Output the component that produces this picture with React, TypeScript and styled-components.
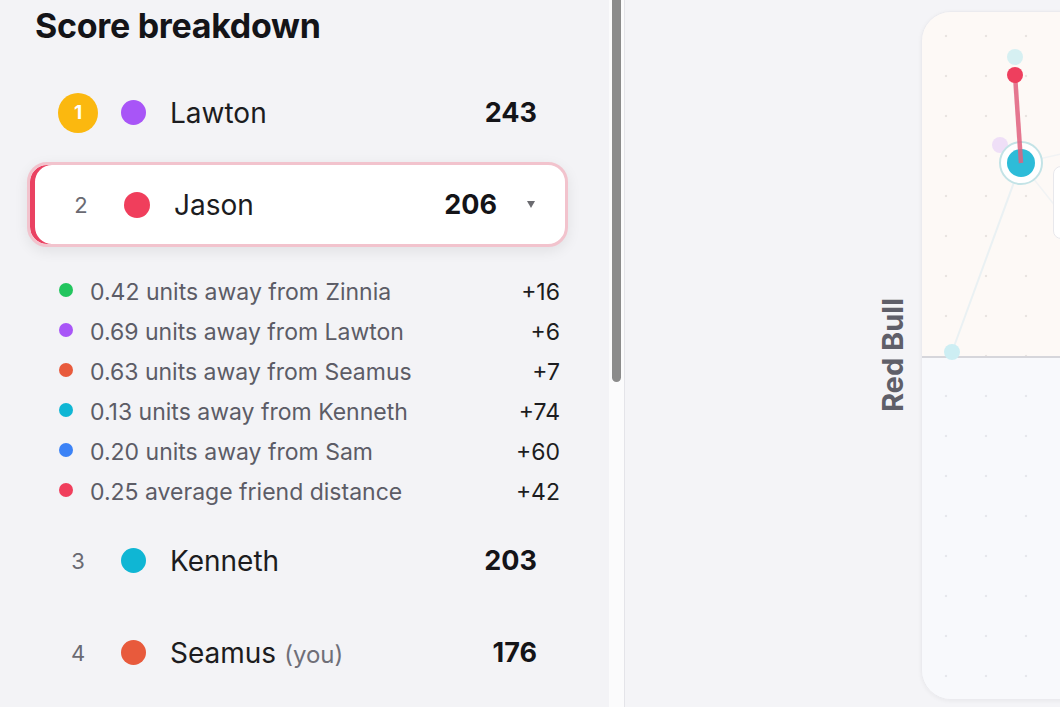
import styled, { createGlobalStyle } from 'styled-components';

type Player = {
  rank: number;
  name: string;
  color: string;
  score: number;
  you?: boolean;
  selected?: boolean;
};

type Reason = {
  color: string;
  text: string;
  points: string;
};

const players: Player[] = [
  { rank: 1, name: 'Lawton', color: '#a855f7', score: 243 },
  { rank: 2, name: 'Jason', color: '#f03e5c', score: 206, selected: true },
  { rank: 3, name: 'Kenneth', color: '#0fb6d4', score: 203 },
  { rank: 4, name: 'Seamus', color: '#e85a3c', score: 176, you: true },
];

const reasons: Reason[] = [
  { color: '#22c55e', text: '0.42 units away from Zinnia', points: '+16' },
  { color: '#a855f7', text: '0.69 units away from Lawton', points: '+6' },
  { color: '#e85a3c', text: '0.63 units away from Seamus', points: '+7' },
  { color: '#0fb6d4', text: '0.13 units away from Kenneth', points: '+74' },
  { color: '#3b82f6', text: '0.20 units away from Sam', points: '+60' },
  { color: '#f03e5c', text: '0.25 average friend distance', points: '+42' },
];

export default function App() {
  return (
    <>
      <GlobalStyle />
      <Page>
        <Panel>
          <Title>Score breakdown</Title>
          <List>
            {players.map((p) => (
              <PlayerBlock key={p.rank} player={p} />
            ))}
          </List>
        </Panel>
        <ScrollTrack>
          <Thumb />
        </ScrollTrack>
        <Main>
          <AxisLabel>Red Bull</AxisLabel>
          <ChartCard>
            <ChartTop />
            <ChartDivider />
            <ChartBottom />
            <Graph viewBox="0 0 640 687" width="640" height="687">
              <line x1="99" y1="151" x2="30" y2="340" stroke="#eaf1f3" strokeWidth="2" />
              <line x1="99" y1="151" x2="170" y2="135" stroke="#f1f3f4" strokeWidth="1.5" />
              <line x1="99" y1="151" x2="150" y2="215" stroke="#f1f3f4" strokeWidth="1.5" />
              <circle cx="30" cy="340" r="8" fill="#cdeef3" />
              <circle cx="93" cy="45" r="8" fill="#d6f0f2" />
              <circle cx="78" cy="133" r="8" fill="#efdff7" />
              <circle cx="99" cy="151" r="21" fill="#fff" stroke="#c3e3e6" strokeWidth="2" />
              <circle cx="99" cy="151" r="14" fill="#2dbcd8" />
              <line
                x1="93"
                y1="63"
                x2="99"
                y2="151"
                stroke="#e0607e"
                strokeWidth="4.5"
                strokeOpacity="0.85"
              />
              <circle cx="93" cy="63" r="8" fill="#ee3f5e" />
            </Graph>
            <Tooltip />
          </ChartCard>
        </Main>
      </Page>
    </>
  );
}

function PlayerBlock({ player }: { player: Player }) {
  const { rank, name, color, score, you, selected } = player;
  return (
    <>
      <Row $selected={selected}>
        <Rank $badge={rank === 1}>{rank}</Rank>
        <Dot $color={color} $size={selected ? 26 : 25} />
        <Name>
          {name}
          {you && <You>(you)</You>}
        </Name>
        <Score>{score}</Score>
        {selected && <Caret />}
      </Row>
      {selected && (
        <Breakdown>
          {reasons.map((r) => (
            <ReasonLine key={r.text}>
              <SmallDot $color={r.color} />
              <ReasonText>{r.text}</ReasonText>
              <Points>{r.points}</Points>
            </ReasonLine>
          ))}
        </Breakdown>
      )}
    </>
  );
}

const GlobalStyle = createGlobalStyle`
  html, body {
    margin: 0;
    padding: 0;
    background: #f3f3f6;
  }
  body {
    font-family: Inter, 'Noto Sans', sans-serif;
    color: #1c1c20;
    overflow: hidden;
  }
  * {
    box-sizing: border-box;
  }
`;

const Page = styled.div`
  display: flex;
  width: 1060px;
  height: 707px;
  overflow: hidden;
  background: #f3f3f6;
`;

const Panel = styled.div`
  width: 609px;
  flex-shrink: 0;
  padding-top: 6px;
  overflow: hidden;
`;

const Title = styled.h1`
  margin: 0 0 24px 35px;
  font-size: 34px;
  line-height: 40px;
  font-weight: 700;
  letter-spacing: -0.3px;
  color: #141418;
`;

const List = styled.div`
  display: flex;
  flex-direction: column;
  gap: 7px;
  width: 541px;
  margin-left: 27px;
`;

const Row = styled.div<{ $selected?: boolean }>`
  display: flex;
  align-items: center;
  height: 85px;
  flex-shrink: 0;
  padding: 0 ${(p) => (p.$selected ? '30px' : '28px')} 0
    ${(p) => (p.$selected ? '31px' : '28px')};
  border: 3px solid ${(p) => (p.$selected ? '#f2c3cd' : 'transparent')};
  border-radius: 20px;
  background: ${(p) => (p.$selected ? '#fff' : 'transparent')};
  box-shadow: ${(p) =>
    p.$selected
      ? 'inset 5px 0 0 #ea4262, 0 4px 14px rgba(0, 0, 0, 0.08)'
      : 'none'};
`;

const Rank = styled.div<{ $badge?: boolean }>`
  width: 40px;
  height: 40px;
  flex-shrink: 0;
  display: flex;
  align-items: center;
  justify-content: center;
  border-radius: 50%;
  font-size: ${(p) => (p.$badge ? '19px' : '22px')};
  font-weight: ${(p) => (p.$badge ? 700 : 400)};
  color: ${(p) => (p.$badge ? '#fff' : '#6a6a72')};
  background: ${(p) => (p.$badge ? '#fbb80f' : 'transparent')};
`;

const Dot = styled.span<{ $color: string; $size: number }>`
  width: ${(p) => p.$size}px;
  height: ${(p) => p.$size}px;
  flex-shrink: 0;
  margin-left: 23px;
  border-radius: 50%;
  background: ${(p) => p.$color};
`;

const Name = styled.div`
  margin-left: 24px;
  font-size: 28px;
  color: #1c1c20;
`;

const You = styled.span`
  margin-left: 8px;
  font-size: 24px;
  color: #6f6f78;
`;

const Score = styled.div`
  margin-left: auto;
  font-size: 27px;
  font-weight: 700;
  color: #141418;
`;

const Caret = styled.span`
  width: 0;
  height: 0;
  margin-left: 30px;
  border-left: 4px solid transparent;
  border-right: 4px solid transparent;
  border-top: 7px solid #6b6b70;
`;

const Breakdown = styled.div`
  display: flex;
  flex-direction: column;
  padding: 18px 8px 0 32px;
  margin-bottom: -1px;
`;

const ReasonLine = styled.div`
  display: grid;
  grid-template-columns: 14px 1fr auto;
  column-gap: 17px;
  align-items: center;
  height: 40px;
`;

const SmallDot = styled.span<{ $color: string }>`
  width: 14px;
  height: 14px;
  margin-top: -4px;
  border-radius: 50%;
  background: ${(p) => p.$color};
`;

const ReasonText = styled.span`
  font-size: 23px;
  color: #5c5c66;
`;

const Points = styled.span`
  font-size: 23px;
  color: #1c1c20;
`;

const ScrollTrack = styled.div`
  width: 16px;
  flex-shrink: 0;
  padding: 0 3px;
  background: #fbfbfc;
  border-right: 1px solid #e4e4e9;
`;

const Thumb = styled.div`
  height: 382px;
  border-radius: 0 0 5px 5px;
  background: #8b8b8b;
`;

const Main = styled.div`
  flex: 1;
  display: flex;
  align-items: center;
  padding: 11px 0 7px 253px;
  overflow: hidden;
  background: #f4f4f7;
`;

const AxisLabel = styled.div`
  writing-mode: vertical-rl;
  transform: rotate(180deg);
  line-height: 30px;
  margin-right: 13px;
  font-size: 29px;
  font-weight: 700;
  color: #5f5f69;
  white-space: nowrap;
`;

const ChartCard = styled.div`
  position: relative;
  width: 640px;
  flex-shrink: 0;
  align-self: stretch;
  display: flex;
  flex-direction: column;
  border: 1px solid #ebebef;
  border-radius: 30px;
  overflow: hidden;
  box-shadow: 0 1px 4px rgba(0, 0, 0, 0.05);
`;

const ChartTop = styled.div`
  height: 344px;
  background-color: #fdf9f6;
  background-image: radial-gradient(circle, #e9e4e1 1.1px, transparent 1.6px);
  background-size: 40px 40px;
  background-position: 4px 4px;
`;

const ChartDivider = styled.div`
  height: 1.5px;
  background: #d6d6db;
`;

const ChartBottom = styled.div`
  flex: 1;
  background-color: #f8f9fc;
  background-image: radial-gradient(circle, #e6e7ec 1.1px, transparent 1.6px);
  background-size: 40px 40px;
  background-position: 4px 18px;
`;

const Graph = styled.svg`
  position: absolute;
  left: 0;
  top: 0;
`;

const Tooltip = styled.div`
  position: absolute;
  left: 131px;
  top: 154px;
  width: 160px;
  height: 73px;
  border: 1px solid #e8e8ec;
  border-radius: 8px;
  background: #fff;
`;
